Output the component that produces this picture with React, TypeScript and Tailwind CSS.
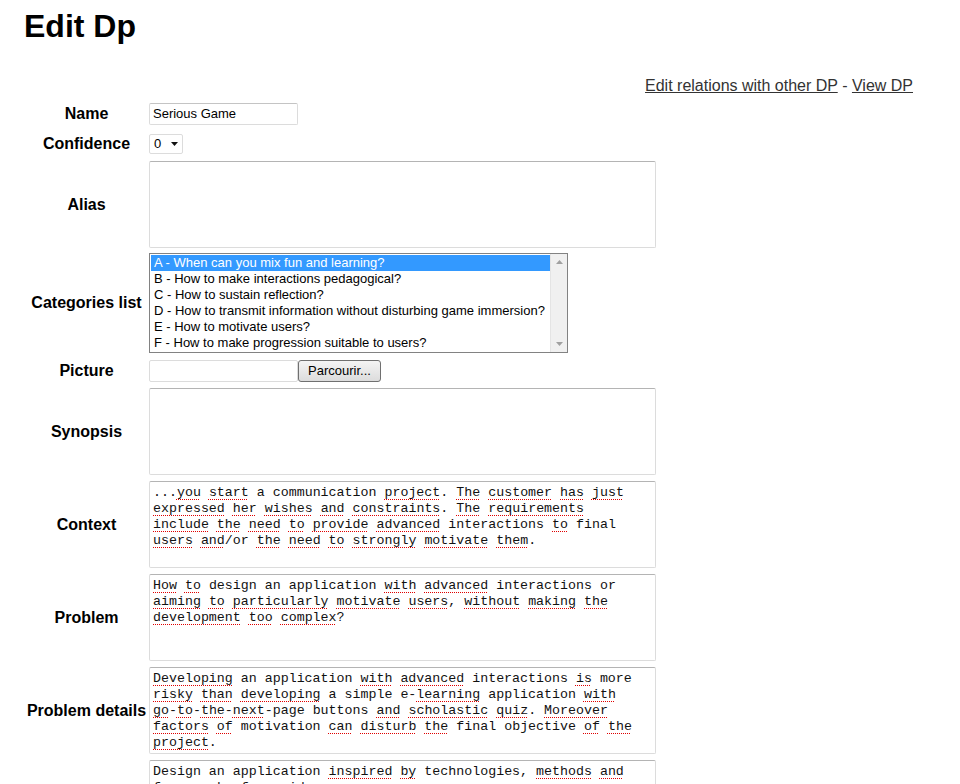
import React from "react";

// words between ~ ~ get the red dotted spellcheck underline
const Marked: React.FC<{ line: string }> = ({ line }) => {
  const parts = line.split(/~([^~]+)~/);
  return (
    <div className="whitespace-pre">
      {parts.map((p, i) =>
        i % 2 === 1 ? (
          <span
            key={i}
            className="underline decoration-dotted decoration-[#e00000] decoration-[1px] underline-offset-[3px]"
          >
            {p}
          </span>
        ) : (
          <span key={i}>{p}</span>
        )
      )}
    </div>
  );
};

const TextBox: React.FC<{ lines?: string[] }> = ({ lines = [] }) => (
  <div className="w-[507px] h-[87px] overflow-hidden rounded-[2px] border border-[#dcdcdc] border-t-[#b4b4b4] bg-white px-[3px] py-[3px] font-['Liberation_Mono',monospace] text-[13.3px] leading-[16px] text-[#111]">
    {lines.map((l, i) => (
      <Marked key={i} line={l} />
    ))}
  </div>
);

const Label: React.FC<{ children: React.ReactNode }> = ({ children }) => (
  <div className="w-[125px] shrink-0 text-center text-[16px] leading-[18px] font-bold text-black">{children}</div>
);

const categories = [
  "A - When can you mix fun and learning?",
  "B - How to make interactions pedagogical?",
  "C - How to sustain reflection?",
  "D - How to transmit information without disturbing game immersion?",
  "E - How to motivate users?",
  "F - How to make progression suitable to users?",
];

const context = [
  "...~you~ ~start~ a communication ~project~. ~The~ ~customer~ ~has~ ~just~",
  "~expressed~ ~her~ ~wishes~ ~and~ ~constraints~. ~The~ ~requirements~",
  "~include~ ~the~ ~need~ ~to~ ~provide~ ~advanced~ interactions ~to~ final",
  "~users~ ~and~/or ~the~ ~need~ ~to~ ~strongly~ ~motivate~ ~them~.",
];

const problem = [
  "~How~ ~to~ design an application ~with~ ~advanced~ interactions or",
  "~aiming~ ~to~ ~particularly~ ~motivate~ ~users~, ~without~ ~making~ ~the~",
  "~development~ ~too~ ~complex~?",
];

const details = [
  "~Developing~ an application ~with~ ~advanced~ interactions ~is~ more",
  "~risky~ ~than~ ~developing~ a simple e-~learning~ application ~with~",
  "~go~-~to~-~the~-~next~-page buttons ~and~ ~scholastic~ ~quiz~. ~Moreover~",
  "~factors~ ~of~ motivation ~can~ ~disturb~ ~the~ final objective ~of~ ~the~",
  "~project~.",
];

const solution = [
  "Design an application ~inspired~ ~by~ technologies, ~methods~ ~and~",
  "~frameworks~ ~from~ video ~games~.",
];

export default function App() {
  return (
    <div className="min-h-[784px] bg-white pl-[24px] pr-[47px] font-['Liberation_Sans',Arial,sans-serif] text-black">
      <h1 className="pt-[8px] text-[32px] font-bold leading-[37px]">Edit Dp</h1>

      <div className="mt-[32px] text-right text-[16px] leading-[18px] text-[#333]">
        <a className="underline decoration-[#333]">Edit relations with other DP</a>
        <span> - </span>
        <a className="underline decoration-[#333]">View DP</a>
      </div>

      <div className="flex flex-col">
        {/* Name */}
        <div className="mt-[8px] flex items-center">
          <Label>Name</Label>
          <div className="flex h-[22px] w-[149px] items-center rounded-[2px] border border-[#dcdcdc] border-t-[#c4c4c4] px-[3px] text-[13px]">
            Serious Game
          </div>
        </div>

        {/* Confidence */}
        <div className="mt-[9px] flex items-center">
          <Label>Confidence</Label>
          <div className="flex h-[20px] w-[34px] items-center justify-between rounded-[2px] border border-[#dcdcdc] pl-[4px] pr-[4px] text-[13px]">
            <span>0</span>
            <svg width="7" height="4" viewBox="0 0 7 4">
              <path d="M0 0h7L3.5 4z" fill="#111" />
            </svg>
          </div>
        </div>

        {/* Alias */}
        <div className="mt-[7px] flex items-center">
          <Label>Alias</Label>
          <TextBox />
        </div>

        {/* Categories */}
        <div className="mt-[5px] flex items-center">
          <Label>Categories list</Label>
          <div className="flex h-[100px] w-[419px] border border-[#828282] bg-white">
            <div className="flex-1 pt-[1px] pl-[1px] text-[13px] leading-[16px]">
              {categories.map((c, i) => (
                <div
                  key={c}
                  className={
                    i === 0
                      ? "bg-[#3399ff] pl-[3px] text-white whitespace-nowrap"
                      : "pl-[3px] text-black whitespace-nowrap"
                  }
                >
                  {c}
                </div>
              ))}
            </div>
            <div className="flex w-[17px] flex-col items-center justify-between border-l border-[#e4e4e4] bg-[#f0f0f0] py-[6px]">
              <svg width="7" height="4" viewBox="0 0 7 4">
                <path d="M0 4h7L3.5 0z" fill="#a0a0a0" />
              </svg>
              <svg width="7" height="4" viewBox="0 0 7 4">
                <path d="M0 0h7L3.5 4z" fill="#a0a0a0" />
              </svg>
            </div>
          </div>
        </div>

        {/* Picture */}
        <div className="mt-[7px] flex items-center">
          <Label>Picture</Label>
          <div className="flex items-center">
            <div className="h-[22px] w-[149px] rounded-[2px] border border-[#dcdcdc]" />
            <button className="h-[22px] w-[83px] rounded-[3px] border border-[#707070] bg-gradient-to-b from-[#f4f4f4] to-[#dcdcdc] text-[13px] leading-[18px] text-black">
              Parcourir...
            </button>
          </div>
        </div>

        {/* Synopsis */}
        <div className="mt-[6px] flex items-center">
          <Label>Synopsis</Label>
          <TextBox />
        </div>

        <div className="mt-[6px] flex items-center">
          <Label>Context</Label>
          <TextBox lines={context} />
        </div>

        <div className="mt-[6px] flex items-center">
          <Label>Problem</Label>
          <TextBox lines={problem} />
        </div>

        <div className="mt-[6px] flex items-center">
          <Label>Problem details</Label>
          <TextBox lines={details} />
        </div>

        <div className="mt-[6px] flex items-center">
          <Label>Solution</Label>
          <TextBox lines={solution} />
        </div>
      </div>
    </div>
  );
}
